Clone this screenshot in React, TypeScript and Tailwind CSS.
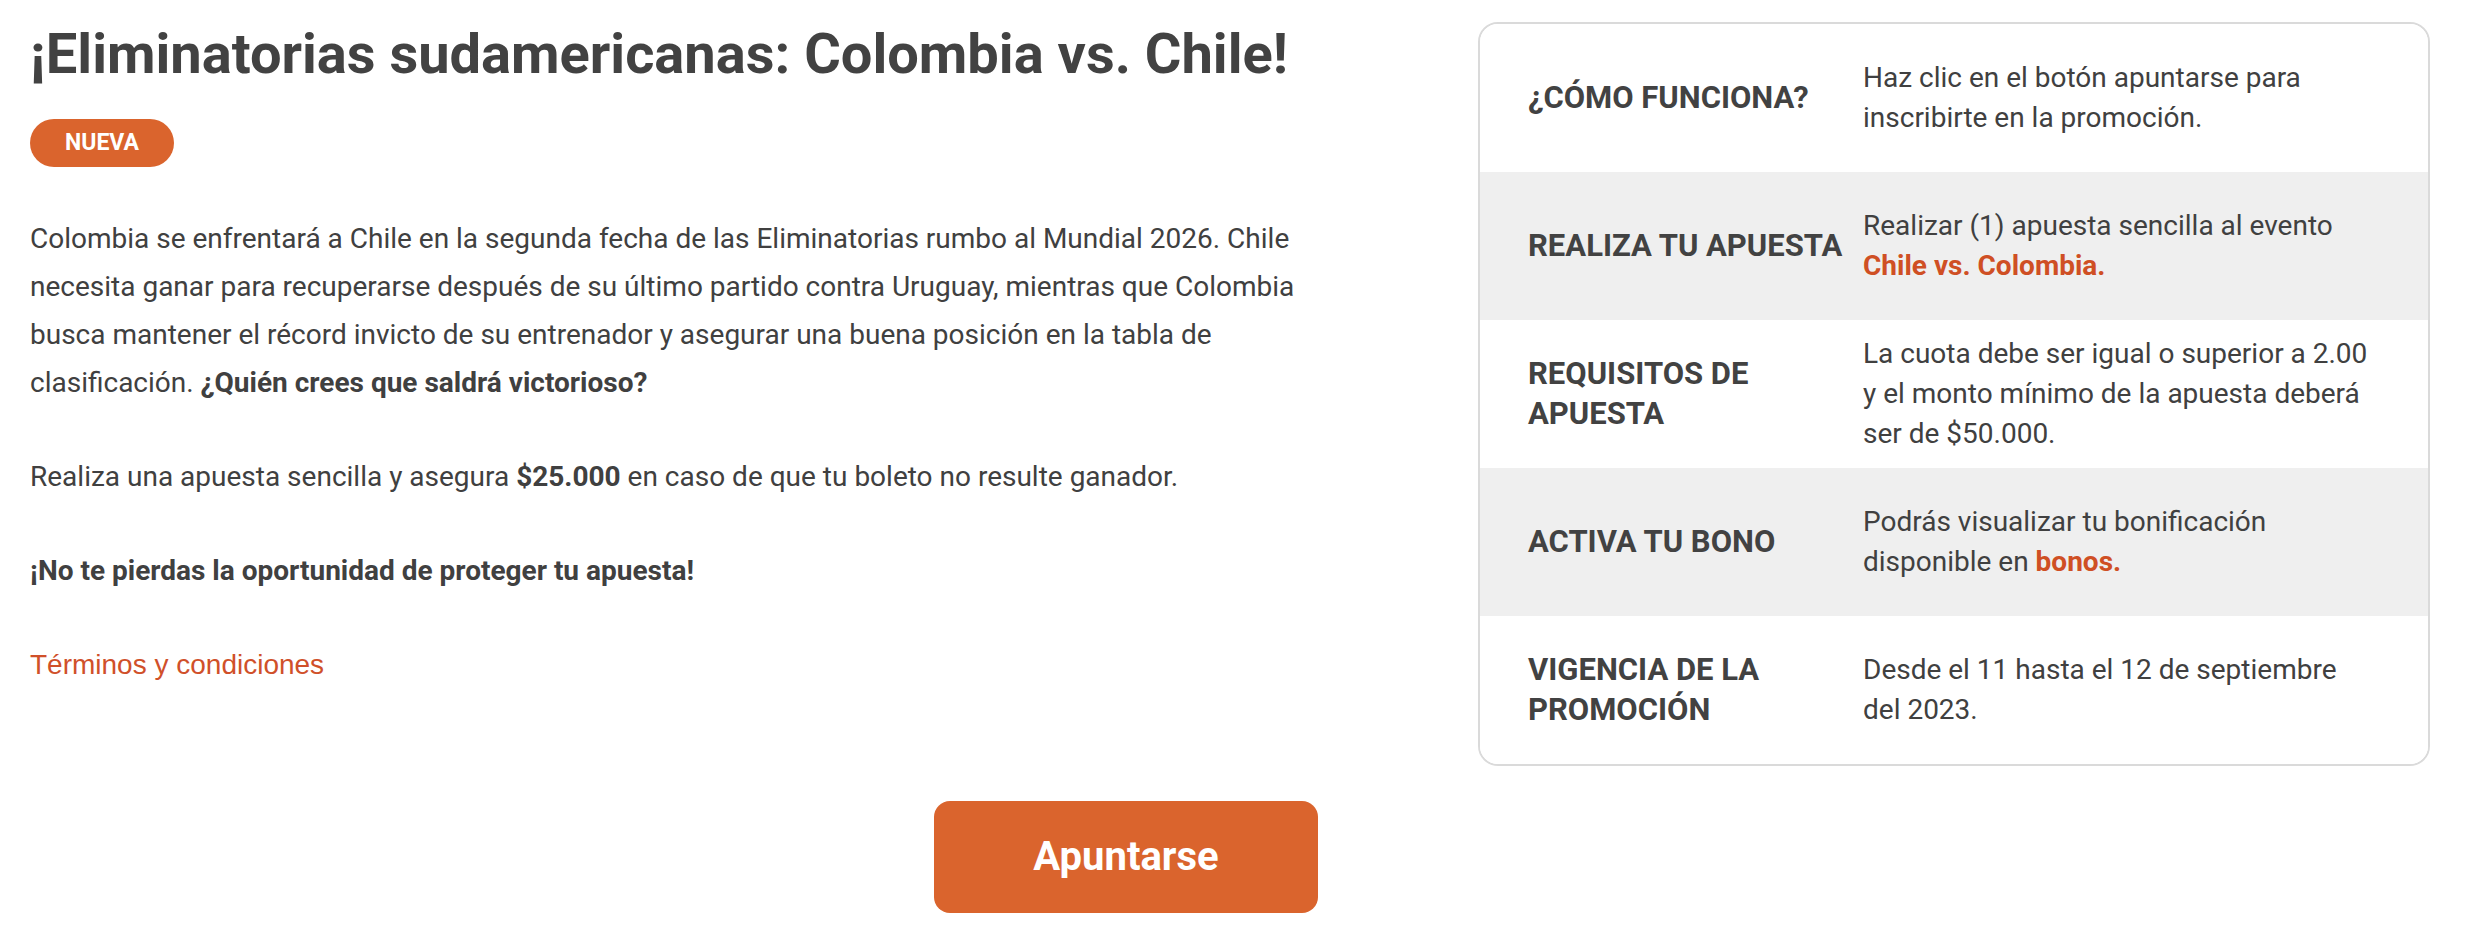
const rows = [
  {
    label: "¿CÓMO FUNCIONA?",
    value: <>Haz clic en el botón apuntarse para inscribirte en la promoción.</>,
    gray: false,
  },
  {
    label: "REALIZA TU APUESTA",
    value: (
      <>
        Realizar (1) apuesta sencilla al evento{" "}
        <span className="font-bold text-[#cf4f24]">Chile vs. Colombia.</span>
      </>
    ),
    gray: true,
  },
  {
    label: "REQUISITOS DE APUESTA",
    value: <>La cuota debe ser igual o superior a 2.00 y el monto mínimo de la apuesta deberá ser de $50.000.</>,
    gray: false,
  },
  {
    label: "ACTIVA TU BONO",
    value: (
      <>
        Podrás visualizar tu bonificación disponible en{" "}
        <span className="font-bold text-[#cf4f24]">bonos.</span>
      </>
    ),
    gray: true,
  },
  {
    label: "VIGENCIA DE LA PROMOCIÓN",
    value: <>Desde el 11 hasta el 12 de septiembre del 2023.</>,
    gray: false,
  },
];

export default function App() {
  return (
    <div className="min-h-screen bg-white px-[30px] pt-[22px] font-['Roboto',sans-serif] text-[#404040]">
      <div className="flex items-start justify-between pr-[10px]">
        {/* Left: promo description */}
        <div className="w-[1310px]">
          <h1 className="text-[56px] font-bold leading-[64px] text-[#424242]">
            ¡Eliminatorias sudamericanas: Colombia vs. Chile!
          </h1>
          <span className="mt-[33px] inline-flex h-[48px] w-[144px] items-center justify-center rounded-full bg-[#da642d] text-[23px] font-bold text-white">
            NUEVA
          </span>
          <div className="mt-[48px] text-[28px] leading-[48px]">
            <p className="mb-[46px]">
              Colombia se enfrentará a Chile en la segunda fecha de las Eliminatorias rumbo al Mundial 2026. Chile
              necesita ganar para recuperarse después de su último partido contra Uruguay, mientras que Colombia
              busca mantener el récord invicto de su entrenador y asegurar una buena posición en la tabla de
              clasificación. <b>¿Quién crees que saldrá victorioso?</b>
            </p>
            <p className="mb-[46px]">
              Realiza una apuesta sencilla y asegura <b>$25.000</b> en caso de que tu boleto no resulte ganador.
            </p>
            <p className="mb-[46px] font-bold">¡No te pierdas la oportunidad de proteger tu apuesta!</p>
            <a href="#" className="font-['Liberation_Sans',Arial,sans-serif] text-[28px] text-[#d0502a]">
              Términos y condiciones
            </a>
          </div>
        </div>

        {/* Right: how it works card */}
        <div className="w-[952px] overflow-hidden rounded-[20px] border-2 border-[#dadada]">
          {rows.map((r) => (
            <div
              key={r.label}
              className={`flex h-[148px] items-center pl-[48px] pr-[52px] ${r.gray ? "bg-[#efefef]" : "bg-white"}`}
            >
              <div className="w-[335px] shrink-0 text-[31px] font-bold leading-[40px] text-[#424242]">{r.label}</div>
              <div className="flex-1 text-[28px] leading-[40px]">{r.value}</div>
            </div>
          ))}
        </div>
      </div>

      <button className="ml-[904px] mt-[35px] flex h-[112px] w-[384px] items-center justify-center rounded-[16px] bg-[#da642d] text-[40px] font-bold text-white">
        Apuntarse
      </button>
    </div>
  );
}
